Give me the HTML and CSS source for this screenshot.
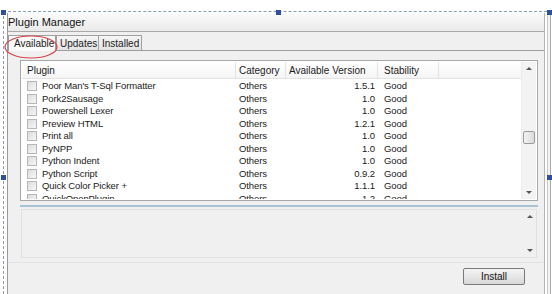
FILE: index.html
```html
<!DOCTYPE html>
<html>
<head>
<meta charset="utf-8">
<link rel="stylesheet" href="styles.css">
</head>
<body>
<div class="stage">
  <div class="frame">
    <div class="dialog">
      <div class="titlebar">Plugin Manager</div>
      <div class="tabs">
        <div class="tab active">Available</div>
        <div class="tab">Updates</div>
        <div class="tab">Installed</div>
      </div>
      <div class="panel">
        <div class="list">
          <div class="grid">
            <div class="head">
              <div class="c1">Plugin</div>
              <div class="c2">Category</div>
              <div class="c3">Available Version</div>
              <div class="c4">Stability</div>
              <div class="c5"></div>
            </div>
            <div class="rows">
              <div class="row"><div class="c1"><span class="cb"></span>Poor Man's T-Sql Formatter</div><div class="c2">Others</div><div class="c3">1.5.1</div><div class="c4">Good</div></div>
              <div class="row"><div class="c1"><span class="cb"></span>Pork2Sausage</div><div class="c2">Others</div><div class="c3">1.0</div><div class="c4">Good</div></div>
              <div class="row"><div class="c1"><span class="cb"></span>Powershell Lexer</div><div class="c2">Others</div><div class="c3">1.0</div><div class="c4">Good</div></div>
              <div class="row"><div class="c1"><span class="cb"></span>Preview HTML</div><div class="c2">Others</div><div class="c3">1.2.1</div><div class="c4">Good</div></div>
              <div class="row"><div class="c1"><span class="cb"></span>Print all</div><div class="c2">Others</div><div class="c3">1.0</div><div class="c4">Good</div></div>
              <div class="row"><div class="c1"><span class="cb"></span>PyNPP</div><div class="c2">Others</div><div class="c3">1.0</div><div class="c4">Good</div></div>
              <div class="row"><div class="c1"><span class="cb"></span>Python Indent</div><div class="c2">Others</div><div class="c3">1.0</div><div class="c4">Good</div></div>
              <div class="row"><div class="c1"><span class="cb"></span>Python Script</div><div class="c2">Others</div><div class="c3">0.9.2</div><div class="c4">Good</div></div>
              <div class="row"><div class="c1"><span class="cb"></span>Quick Color Picker +</div><div class="c2">Others</div><div class="c3">1.1.1</div><div class="c4">Good</div></div>
              <div class="row"><div class="c1"><span class="cb"></span>QuickOpenPlugin</div><div class="c2">Others</div><div class="c3">1.2</div><div class="c4">Good</div></div>
            </div>
          </div>
          <div class="vscroll">
            <span class="arrow up"></span>
            <div class="track"><span class="thumb"></span></div>
            <span class="arrow down"></span>
          </div>
        </div>
        <div class="desc">
          <div class="desc-body"></div>
          <div class="vscroll small">
            <span class="arrow up"></span>
            <div class="track"></div>
            <span class="arrow down"></span>
          </div>
        </div>
      </div>
      <div class="footer">
        <button class="btn">Install</button>
      </div>
    </div>
    <div class="rightedge"></div>
  </div>
  <span class="handle h1"></span>
  <span class="handle h2"></span>
  <span class="handle h3"></span>
  <span class="handle h4"></span>
  <span class="handle h5"></span>
  <svg class="ellipse" width="56" height="26" viewBox="0 0 56 26">
    <ellipse cx="28" cy="13" rx="26" ry="11" fill="none" stroke="#d9434a" stroke-width="1.2"/>
  </svg>
</div>
</body>
</html>
```
FILE: styles.css
```css
* { box-sizing: border-box; }
html, body { margin: 0; padding: 0; }
body {
  width: 552px;
  height: 294px;
  overflow: hidden;
  background: #fff;
  font-family: "Liberation Sans", "DejaVu Sans", sans-serif;
  font-size: 10px;
  color: #1a1a1a;
}
.stage {
  position: relative;
  width: 552px;
  height: 294px;
  padding: 11px 0 0 3px;
}
.frame {
  height: 283px;
  border-top: 1px dashed #8e9ab8;
  border-left: 1px dashed #8e9ab8;
  padding: 1px 0 0 3px;
  display: flex;
}
.dialog {
  width: 538px;
  height: 282px;
  background: #f0f0f0;
  border-left: 1px solid #9a9a9a;
  border-right: 1px solid #b4b4b4;
  display: flex;
  flex-direction: column;
}
.rightedge {
  width: 4px;
  margin-left: 2px;
  border-left: 1px solid #c8c8c8;
  border-right: 1px solid #a8a8a8;
  background: #f4f4f4;
}
.titlebar {
  height: 19px;
  background: linear-gradient(#fbfbfb, #eaeaea);
  border-bottom: 1px solid #a9a9a9;
  font-size: 11px;
  line-height: 19px;
  padding-left: 0;
  color: #111;
}
.tabs {
  display: flex;
  height: 18px;
  padding-top: 3px;
  align-items: flex-end;
}
.tab {
  height: 15px;
  line-height: 15px;
  padding: 0 3px;
  border: 1px solid #a0a0a0;
  border-bottom: none;
  background: linear-gradient(#f6f6f6, #e3e3e3);
  font-size: 10px;
  margin-left: -1px;
}
.tab.active {
  margin-left: 0;
  height: 16px;
  line-height: 16px;
  width: 48px;
  padding-left: 5px;
  background: #fbfbfb;
  position: relative;
  z-index: 1;
  margin-bottom: -1px;
}
.tab:nth-child(2) { margin-left: 0; width: 43px; }
.tab:nth-child(3) { width: 44px; }
.panel {
  border-top: 1px solid #9d9d9d;
  height: 213px;
  padding: 9px 6px 0 12px;
  border-bottom: 1px solid #e2e2e2;
  display: flex;
  flex-direction: column;
}
.list {
  height: 141px;
  border: 1px solid #a7a7a7;
  background: #fff;
  display: flex;
  padding: 1px;
}
.grid { flex: 1; overflow: hidden; }
.head {
  display: flex;
  height: 17px;
  line-height: 17px;
  background: linear-gradient(#ffffff, #f5f5f5);
  border-bottom: 1px solid #e3e3e3;
}
.head > div { border-right: 1px solid #e3e3e3; }
.c1 { width: 214px; padding-left: 5px; display: flex; align-items: center; }
.c2 { width: 50px; padding-left: 3px; }
.c3 { width: 92px; text-align: right; padding-right: 3px; }
.c4 { width: 61px; padding-left: 6px; }
.head .c3 { text-align: left; padding-left: 3px; }
.c5 { flex: 1; border-right: none !important; }
.rows { padding-top: 1px; }
.row {
  display: flex;
  height: 12.5px;
  line-height: 12.5px;
  font-size: 9.5px;
  letter-spacing: -0.1px;
}
.cb {
  width: 10px;
  height: 10px;
  border: 1px solid #b7b7b7;
  background: linear-gradient(135deg, #dcdcdc, #f7f7f7);
  margin-right: 5px;
  flex: none;
}
.vscroll {
  width: 15px;
  background: #f3f3f3;
  border-left: 1px solid #ececec;
  display: flex;
  flex-direction: column;
  align-items: center;
}
.arrow { width: 0; height: 0; border-left: 3px solid transparent; border-right: 3px solid transparent; margin: 5px 0; }
.arrow.up { border-bottom: 3px solid #555; }
.arrow.down { border-top: 3px solid #555; }
.track { flex: 1; width: 100%; position: relative; }
.thumb {
  position: absolute;
  left: 1px;
  right: 1px;
  top: 56px;
  height: 13px;
  border: 1px solid #9a9a9a;
  border-radius: 2px;
  background: linear-gradient(90deg, #f2f2f2, #dcdcdc);
}
.desc {
  margin-top: 4px;
  border-top: 2px solid #a9c3d6;
  height: 55px;
  display: flex;
  padding: 2px 1px 2px 1px;
  background: #f0f0f0;
}
.desc-body {
  flex: 1;
  border: 1px solid #e1e1e1;
  border-right: none;
  background: #f0f0f0;
}
.vscroll.small {
  background: #f0f0f0;
  border: 1px solid #e1e1e1;
  border-left: none;
  width: 14px;
}
.footer {
  flex: 1;
  display: flex;
  justify-content: flex-end;
  align-items: flex-start;
  padding: 5px 19px 0 0;
}
.btn {
  width: 62px;
  height: 17px;
  border: 1px solid #7a7a7a;
  border-radius: 2px;
  background: linear-gradient(#f4f4f4, #d8d8d8);
  font-family: "Liberation Sans", "DejaVu Sans", sans-serif;
  font-size: 10px;
  color: #111;
  padding: 0;
}
.handle {
  position: absolute;
  width: 5px;
  height: 5px;
  background: #2f4f9a;
}
.h1 { left: 1px; top: 10px; }
.h2 { left: 276px; top: 10px; }
.h3 { left: 547px; top: 10px; }
.h4 { left: 1px; top: 175px; }
.h5 { left: 547px; top: 175px; }
.ellipse { position: absolute; left: 3px; top: 34px; z-index: 2; }
```
